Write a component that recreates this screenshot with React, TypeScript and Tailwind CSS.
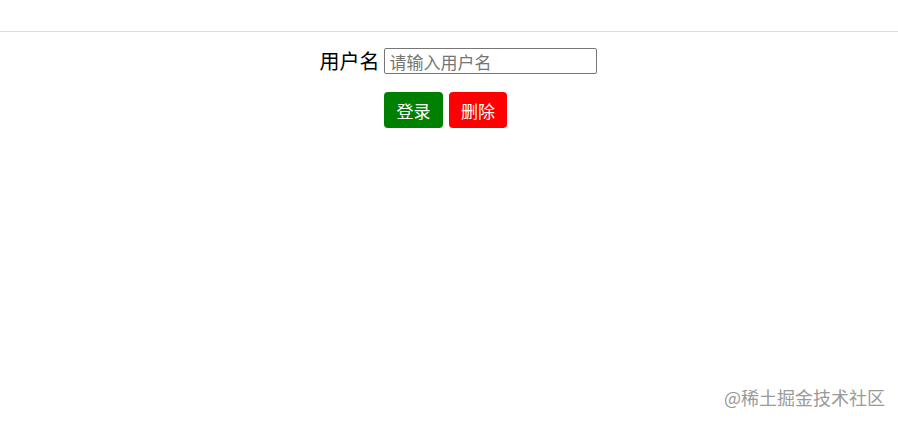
export default function App() {
  return (
    <div
      className="relative w-[898px] h-[422px] bg-white overflow-hidden"
      style={{ fontFamily: '"Noto Sans CJK SC", "Noto Sans", sans-serif' }}
    >
      <div className="h-[31px]" />
      <div className="h-px bg-[#dddddd]" />
      <div className="flex justify-center items-center pl-[18px] mt-[16px] h-[26px]">
        <label className="text-[20px] leading-none text-black mr-[4px]">用户名</label>
        <input
          className="w-[213px] h-[26px] border border-[#767676] rounded-[2px] px-[5px] text-[17px] leading-none outline-none placeholder:text-[#757575]"
          placeholder="请输入用户名"
        />
      </div>
      <div className="flex justify-center pr-[7px] mt-[18px] gap-[6px]">
        <button className="w-[59px] h-[36px] rounded-[4px] bg-[#008000] text-white text-[17px] leading-none">
          登录
        </button>
        <button className="w-[58px] h-[36px] rounded-[4px] bg-[#ff0000] text-white text-[17px] leading-none">
          删除
        </button>
      </div>
      <div className="absolute left-[724px] top-[388px] text-[18px] leading-none text-[#9a9a9a] whitespace-nowrap">
        @稀土掘金技术社区
      </div>
    </div>
  );
}
